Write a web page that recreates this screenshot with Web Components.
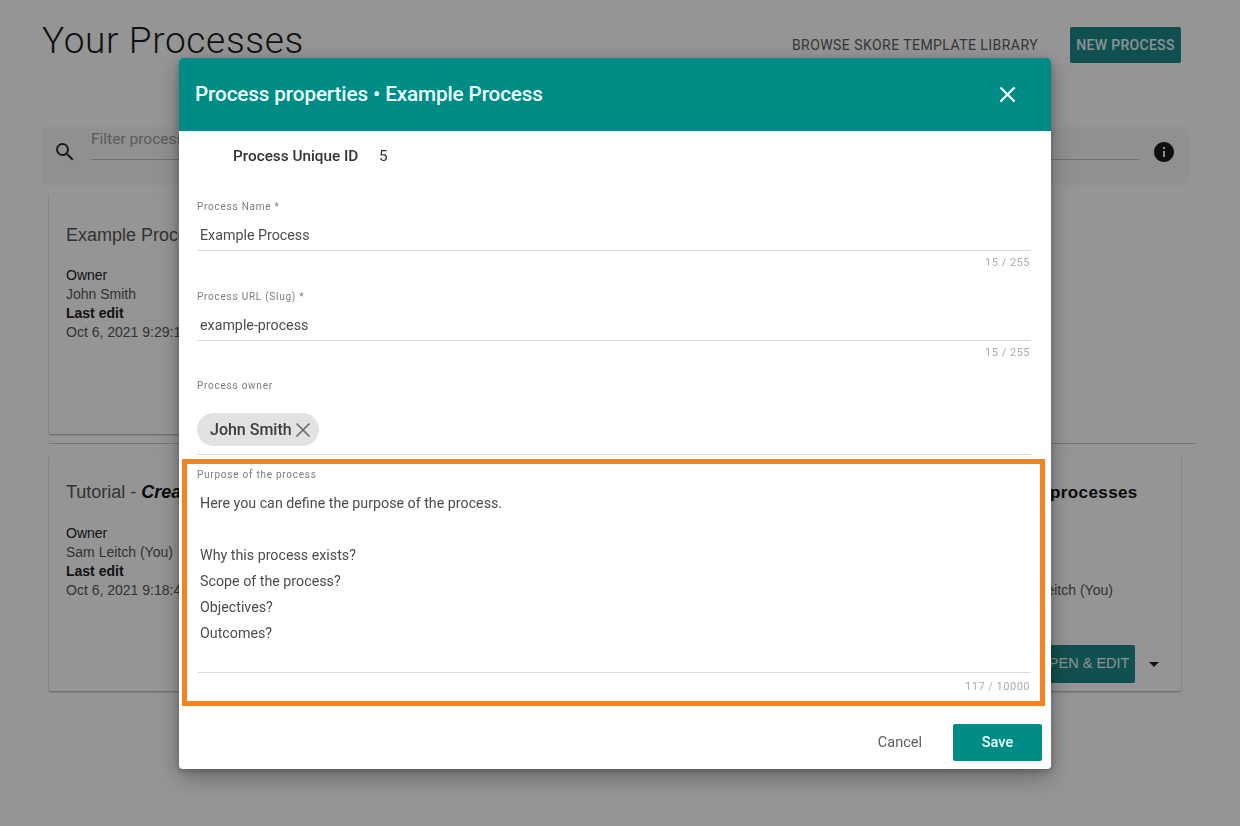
<!DOCTYPE html>
<html>
<head>
<meta charset="utf-8">
<title>Your Processes</title>
<style>
  html, body { margin: 0; height: 100%; overflow: hidden; background: #f8f8f8; }
</style>
</head>
<body>
<process-page></process-page>
<properties-dialog></properties-dialog>

<script>
const ICONS = {
  search: '<path d="M15.5 14h-.79l-.28-.27A6.47 6.47 0 0 0 16 9.5 6.5 6.5 0 1 0 9.5 16c1.61 0 3.09-.59 4.23-1.57l.27.28v.79l5 4.99L20.49 19l-4.99-5zm-6 0C7.01 14 5 11.99 5 9.5S7.01 5 9.5 5 14 7.01 14 9.5 11.99 14 9.5 14z"/>',
  info: '<path d="M12 2C6.48 2 2 6.48 2 12s4.48 10 10 10 10-4.48 10-10S17.52 2 12 2zm1 15h-2v-6h2v6zm0-8h-2V7h2v2z"/>',
  close: '<path d="M19 6.41 17.59 5 12 10.59 6.41 5 5 6.41 10.59 12 5 17.59 6.41 19 12 13.41 17.59 19 19 17.59 13.41 12z"/>',
};
const icon = (name, size, color) =>
  `<svg width="${size}" height="${size}" viewBox="0 0 24 24" fill="${color}">${ICONS[name]}</svg>`;

class ProcessCard extends HTMLElement {
  connectedCallback() {
    const shadow = this.attachShadow({ mode: 'open' });
    shadow.innerHTML = `
      <style>
        :host { display: block; box-sizing: border-box; background: #f8f8f8; border-radius: 2px;
          box-shadow: 0 1px 2px rgba(0,0,0,.35); padding: var(--card-pad, 31px) 17px 0;
          font: 14px/19.3px "Liberation Sans", Arial, sans-serif; color: #555; }
        .title { font-size: 18px; line-height: 22px; color: #555; white-space: nowrap; }
        .meta { margin-top: var(--meta-gap, 19.6px); white-space: nowrap; }
      </style>
      <div class="title"><slot name="title"></slot></div>
      <div class="meta"><slot></slot></div>
      <slot name="actions"></slot>`;
  }
}

class ProcessPage extends HTMLElement {
  connectedCallback() {
    const shadow = this.attachShadow({ mode: 'open' });
    shadow.innerHTML = `
      <style>
        :host { display: block; box-sizing: border-box; width: 1240px; height: 826px; padding: 19px 44px 0 42px;
          font-family: Roboto, sans-serif; color: #111; }
        header { display: flex; align-items: flex-start; height: 108px; }
        h1 { margin: 0; padding-top: 1px; font: 300 37px/42px Roboto, sans-serif; letter-spacing: .65px; color: #1c1c1c; flex: 1; }
        .browse { font: 400 14px/36px Roboto, sans-serif; letter-spacing: .45px; color: #5a5a5a; margin: 8px 32px 0 0; }
        .new { width: 111px; height: 36px; margin: 8px 15px 0 0; background: #1d8585; color: #e6f4f3; border-radius: 2px;
          font: 500 14px/36px Roboto, sans-serif; letter-spacing: .3px; text-align: center; }
        .filter { display: flex; align-items: center; height: 58px; width: 1147px; background: #f0f0f0; border-radius: 6px;
          box-sizing: border-box; padding: 0 13px 8px 11px; }
        .box { flex: 1; margin: 0 13px 0 14px; height: 32px; border-bottom: 1px solid #bbb; font-size: 15.5px; line-height: 24px; color: #999; align-self: flex-start; }
        .filter svg { display: block; }
        .row { display: flex; justify-content: space-between; margin: 0 15px 0 7px; }
        .row.first { margin-top: 8px; height: 241px; }
        .row.second { height: 236px; --card-pad: 26px; --meta-gap: 20.5px; }
        .left { width: 460px; }
        .right { width: 194px; --meta-gap: 77px; }
        hr { margin: 9px 0 11px 7px; border: 0; border-top: 1px solid #c4c4c4; }
        .k { display: block; color: #222; }
        .k.strong { font-weight: 700; }
        .v { display: block; }
        .right .v { padding-left: 2px; }
        .tutorial { font-weight: 700; font-style: italic; color: #111; }
        .tail { padding-left: 46px; font-weight: 700; color: #111; font-size: 17px; letter-spacing: .4px; }
        .actions { display: flex; align-items: center; justify-content: flex-end; margin: 45px -17px 0; }
        .open { width: 103px; height: 38px; margin-right: 14px; background: #1d8585; color: #e6f4f3; border-radius: 2px;
          font: 14.5px/36px "Liberation Sans", sans-serif; text-align: center; white-space: nowrap; }
        .caret { width: 0; height: 0; border: 5px solid transparent; border-top-color: #222; border-bottom: 0; margin-right: 22px; }
      </style>
      <header>
        <h1>Your Processes</h1>
        <span class="browse">BROWSE SKORE TEMPLATE LIBRARY</span>
        <div class="new">NEW PROCESS</div>
      </header>
      <div class="filter">
        ${icon('search', 24, '#2b2b2b')}
        <div class="box">Filter processes</div>
        ${icon('info', 24, '#1a1a1a')}
      </div>
      <div class="row first">
        <process-card class="left">
          <span slot="title">Example Process</span>
          <span class="k">Owner</span>
          <span class="v">John Smith</span>
          <span class="k strong">Last edit</span>
          <span class="v">Oct 6, 2021 9:29:11 AM</span>
        </process-card>
      </div>
      <hr>
      <div class="row second">
        <process-card class="left">
          <span slot="title">Tutorial - <span class="tutorial">Create</span></span>
          <span class="k">Owner</span>
          <span class="v">Sam Leitch (You)</span>
          <span class="k strong">Last edit</span>
          <span class="v">Oct 6, 2021 9:18:41 AM</span>
        </process-card>
        <process-card class="right">
          <span slot="title" class="tail">processes</span>
          <span class="v">Sam Leitch (You)</span>
          <div class="actions" slot="actions">
            <div class="open">OPEN &amp; EDIT</div>
            <div class="caret"></div>
          </div>
        </process-card>
      </div>`;
  }
}

class TextField extends HTMLElement {
  connectedCallback() {
    const shadow = this.attachShadow({ mode: 'open' });
    const counter = this.getAttribute('counter');
    shadow.innerHTML = `
      <style>
        :host { display: block; }
        label { display: block; font: 400 10px/12px Roboto, sans-serif; letter-spacing: .75px; color: #7b7b7b; }
        .control { margin-top: var(--control-gap, 9px); padding: 0 0 var(--control-pad, 2px) 3px; border-bottom: 1px solid #dcdcdc;
          font: 400 14.25px/26px Roboto, sans-serif; color: #4c4c4c; }
        .counter { height: 23px; margin-top: var(--counter-gap, 0); text-align: right; font: 400 11px/23px Roboto, sans-serif; letter-spacing: .5px; color: #ababab; padding-right: 1px; }
      </style>
      <label>${this.getAttribute('label')}</label>
      <div class="control"><slot></slot></div>
      ${counter ? `<div class="counter">${counter}</div>` : ''}`;
  }
}

class UserChip extends HTMLElement {
  connectedCallback() {
    const shadow = this.attachShadow({ mode: 'open' });
    shadow.innerHTML = `
      <style>
        :host { display: inline-flex; align-items: center; height: 33px; box-sizing: border-box; margin-left: -3px; padding: 0 7px 0 13px;
          background: #e2e2e2; border-radius: 17px; font: 500 16px/33px Roboto, sans-serif; color: #3c3c3c; }
        svg { display: block; margin-left: 2px; }
      </style>
      <slot></slot>
      <svg width="18" height="18" viewBox="0 0 18 18" fill="none" stroke="#6a6a6a" stroke-width="1.7"><path d="M2.5 2.5 15.5 15.5M15.5 2.5 2.5 15.5"/></svg>`;
  }
}

class PropertiesDialog extends HTMLElement {
  connectedCallback() {
    const shadow = this.attachShadow({ mode: 'open' });
    shadow.innerHTML = `
      <style>
        :host { position: fixed; inset: 0; display: block; background: rgba(0,0,0,.4); font-family: Roboto, sans-serif; }
        .dialog { position: absolute; left: 179px; top: 58px; width: 872px; height: 711px; background: #fff; border-radius: 4px;
          box-shadow: 0 8px 24px rgba(0,0,0,.3), 0 2px 6px rgba(0,0,0,.25); display: flex; flex-direction: column; overflow: hidden; }
        .head { flex: none; height: 73px; background: #008b87; color: #effffd; display: flex; align-items: center; justify-content: space-between; padding: 0 30px 0 16px; }
        .head h2 { margin: 0 0 2px; font: 500 20.7px/24px Roboto, sans-serif; letter-spacing: -.12px; }
        .head svg { display: block; }
        .uid { padding: 13px 0 0 54px; height: 56px; box-sizing: border-box; font: 500 15.3px/24px Roboto, sans-serif; color: #333; }
        .uid span { font-weight: 400; margin-left: 17px; }
        .fields { padding: 14px 20px 0 18px; }
        .second { margin-top: 17px; }
        .owner { margin-top: 16px; --control-gap: 21px; --control-pad: 8px; }
        .mark { margin: 4px 6px 0 3px; border: 5px solid #f58220; padding: 5px 9px 0 10px; height: 247px; box-sizing: border-box; --control-pad: 5px; --counter-gap: 2px; }
        .mark p { margin: 0; white-space: pre-line; height: 177px; }
        .foot { display: flex; justify-content: flex-end; align-items: center; padding: 18px 9px 0 0; }
        .cancel { font: 400 14.5px/37px Roboto, sans-serif; color: #5c5c5c; margin-right: 31px; }
        .save { width: 89px; height: 37px; background: #008b87; color: #effffd; border-radius: 2px; font: 500 14.5px/37px Roboto, sans-serif; text-align: center; }
      </style>
      <section class="dialog">
        <div class="head">
          <h2>Process properties • Example Process</h2>
          ${icon('close', 27, '#effffd')}
        </div>
        <div class="uid">Process Unique ID <span>5</span></div>
        <div class="fields">
          <text-field label="Process Name *" counter="15 / 255">Example Process</text-field>
          <text-field class="second" label="Process URL (Slug) *" counter="15 / 255">example-process</text-field>
          <text-field class="owner" label="Process owner"><user-chip>John Smith</user-chip></text-field>
        </div>
        <div class="mark">
          <text-field label="Purpose of the process" counter="117 / 10000"><p>Here you can define the purpose of the process.

Why this process exists?
Scope of the process?
Objectives?
Outcomes?</p></text-field>
        </div>
        <div class="foot">
          <span class="cancel">Cancel</span>
          <div class="save">Save</div>
        </div>
      </section>`;
  }
}

customElements.define('process-card', ProcessCard);
customElements.define('process-page', ProcessPage);
customElements.define('text-field', TextField);
customElements.define('user-chip', UserChip);
customElements.define('properties-dialog', PropertiesDialog);
</script>
</body>
</html>
